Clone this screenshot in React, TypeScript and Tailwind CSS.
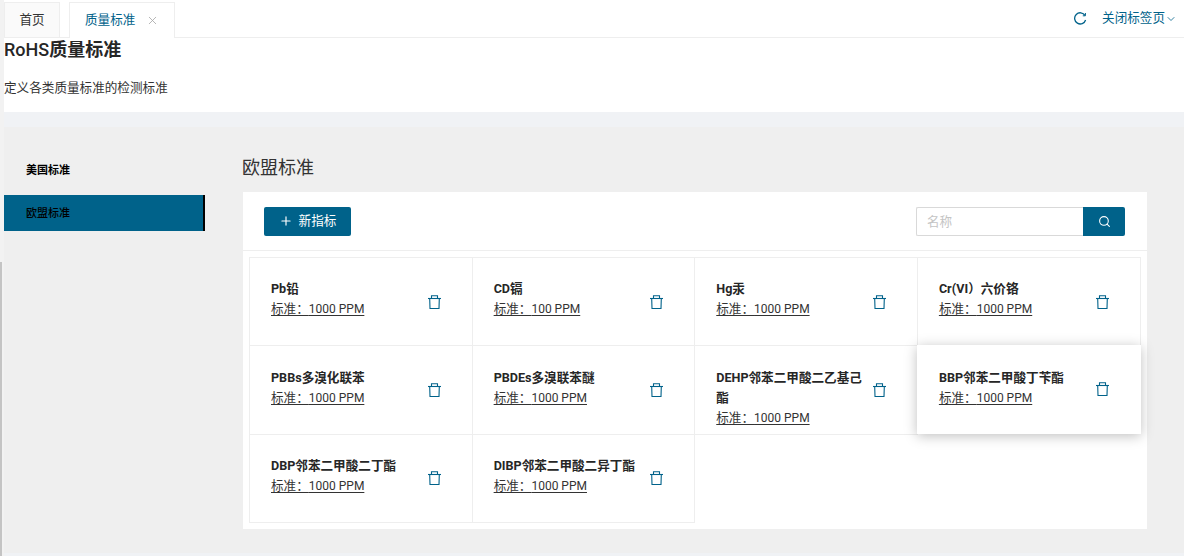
import { ChevronDown, Plus, Search, X } from 'lucide-react';

const FONT = "font-['Roboto','Noto_Sans_CJK_SC',sans-serif]";

const items = [
  { name: 'Pb铅', value: '1000 PPM' },
  { name: 'CD镉', value: '100 PPM' },
  { name: 'Hg汞', value: '1000 PPM' },
  { name: 'Cr(VI）六价铬', value: '1000 PPM' },
  { name: 'PBBs多溴化联苯', value: '1000 PPM' },
  { name: 'PBDEs多溴联苯醚', value: '1000 PPM' },
  { name: 'DEHP邻苯二甲酸二乙基己酯', value: '1000 PPM' },
  { name: 'BBP邻苯二甲酸丁苄酯', value: '1000 PPM', raised: true },
  { name: 'DBP邻苯二甲酸二丁酯', value: '1000 PPM' },
  { name: 'DIBP邻苯二甲酸二异丁酯', value: '1000 PPM' },
];

function TrashIcon() {
  return (
    <svg width="13" height="14" viewBox="0 0 13 14" fill="none" stroke="#00628a" strokeWidth="1.1" className="shrink-0">
      <path d="M0 3.5h13" />
      <path d="M3.5 3.5V.7h6v2.8" />
      <path d="M1.7 3.5l.3 10h9l.3-10" />
    </svg>
  );
}

function RefreshIcon() {
  return (
    <svg width="14" height="14" viewBox="0 0 14 14" fill="none" stroke="#00628a" strokeWidth="1.3">
      <path d="M12 3.4A5.6 5.6 0 1 0 12.6 8" />
      <path d="M12.4 1v2.8H9.8" strokeWidth="1" />
    </svg>
  );
}

function Card({ name, value, raised }: { name: string; value: string; raised?: boolean }) {
  return (
    <div
      className={`flex h-[88.33px] items-center border-r border-b border-[#eeeeee] bg-white pr-[31px] ${
        raised ? 'relative -mt-px -ml-px pl-[22px] shadow-[0_2px_12px_rgba(0,0,0,0.25)] border-white' : 'pl-[21px]'
      }`}
    >
      <div className={`min-w-0 flex-1 self-start pr-2 text-[12.6px] leading-[20px] ${raised ? 'pt-[22.3px]' : 'pt-[21.3px]'}`}>
        <div className="font-bold text-[#262626]">{name}</div>
        <div className="text-[#333333] underline underline-offset-2">
          标准：<span className="text-[12px]">{value}</span>
        </div>
      </div>
      <TrashIcon />
    </div>
  );
}

export default function App() {
  return (
    <div className={`${FONT} relative flex h-[556px] w-[1184px] overflow-hidden bg-[#efefef]`}>
      <div className="relative w-1 shrink-0 bg-[#f2f2f2]">
        <div className="absolute left-0 top-[262px] h-[294px] w-0.5 bg-[#c4c4c4]" />
      </div>
      <div className="flex min-w-0 flex-1 flex-col">
        <div className="-ml-1 flex h-[38px] shrink-0 items-end border-b border-[#eeeeee] bg-white pl-1 text-[12.6px]">
          <div className="flex h-[35px] w-[56px] items-center justify-center border border-b-0 border-[#eeeeee] bg-[#fafafa] text-[#333333]">
            首页
          </div>
          <div className="-mb-px ml-[9px] flex h-[36px] w-[106px] items-center border border-b-0 border-[#eeeeee] bg-white pl-[15px] text-[#00628a]">
            质量标准
            <X className="ml-[11px] text-[#a6a6a6]" size={13} strokeWidth={1.5} />
          </div>
          <div className="ml-auto flex h-full items-center text-[#00628a]">
            <RefreshIcon />
            <span className="ml-[15px]">关闭标签页</span>
            <ChevronDown size={12} strokeWidth={1.6} className="mr-[7px]" />
          </div>
        </div>

        <div className="h-[74px] shrink-0 bg-white">
          <h1 className="pt-[1px] text-[18px] font-bold leading-[22px] text-[#262626]">
            <span className="font-medium">RoHS</span>质量标准
          </h1>
          <p className="mt-[17px] text-[12.6px] leading-[20px] text-[#333333]">定义各类质量标准的检测标准</p>
        </div>

        <div className="h-[15px] shrink-0 bg-[#f0f2f5]" />

        <div className="flex min-h-0 flex-1">
          <aside className="w-[201px] shrink-0 pt-[25px] text-[11px] text-black">
            <div className="flex h-[36px] items-center pl-[22px] pt-[2px] font-bold">美国标准</div>
            <div className="mt-[7px] flex h-[36px] items-center border-r-2 border-black bg-[#00628a] pl-[22px] pt-[2px] font-medium">
              欧盟标准
            </div>
          </aside>
          <main className="ml-[38px] w-[904px] shrink-0">
            <h2 className="-ml-px pt-[29px] text-[18px] font-normal leading-[24px] text-[#333333]">欧盟标准</h2>
            <div className="mt-[12px] bg-white">
              <div className="flex h-[59px] items-center justify-between border-b border-[#eeeeee] pl-[21px] pr-[22px]">
                <button className="flex h-[29px] w-[87px] items-center justify-center rounded-[2px] bg-[#00628a] text-[12.6px] text-white">
                  <Plus size={14} strokeWidth={2} className="mr-[6px]" />
                  新指标
                </button>
                <div className="flex h-[29px] w-[209px]">
                  <input
                    placeholder="名称"
                    className="h-full w-[167px] rounded-l-[2px] border border-r-0 border-[#d9d9d9] bg-white pl-[10px] text-[12.6px] outline-none placeholder:text-[#c4c4c4]"
                  />
                  <div className="flex h-full w-[42px] items-center justify-center rounded-r-[2px] bg-[#00628a]">
                    <Search size={13} strokeWidth={2} className="text-white" />
                  </div>
                </div>
              </div>
              <div className="px-[6px] pb-[6px] pt-[6px]">
                <div className="grid w-[891.5px] grid-cols-4 border-t border-l border-[#eeeeee]">
                  {items.map((item) => (
                    <Card key={item.name} {...item} />
                  ))}
                </div>
              </div>
            </div>
          </main>
        </div>
        <div className="h-[3px] shrink-0 bg-[#f0f2f5]" />
      </div>
    </div>
  );
}
